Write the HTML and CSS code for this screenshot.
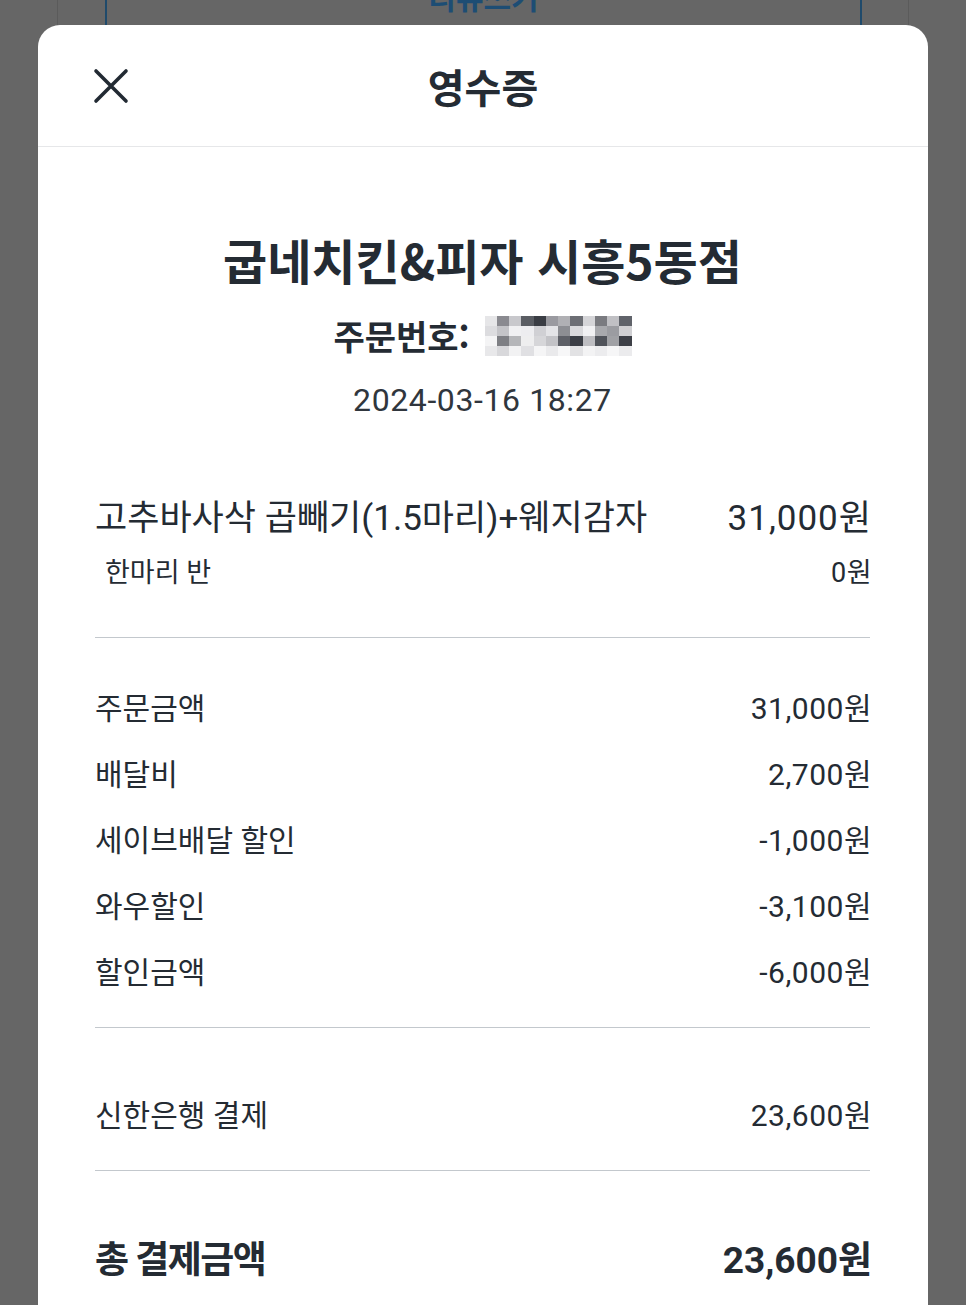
FILE: index.html
```html
<!DOCTYPE html>
<html lang="ko">
<head>
<meta charset="utf-8">
<title>영수증</title>
<link rel="stylesheet" href="styles.css">
</head>
<body>
<div class="behind">
  <div class="behind-card">
    <div class="behind-button"><span class="behind-label">리뷰쓰기</span></div>
  </div>
</div>
<div class="sheet">
  <header class="sheet-header">
    <button class="close" aria-label="닫기">
      <svg width="36" height="36" viewBox="0 0 36 36"><path d="M3 3 L33 33 M33 3 L3 33" stroke="#222a33" stroke-width="3.6" stroke-linecap="round" fill="none"/></svg>
    </button>
    <h1 class="sheet-title">영수증</h1>
    <span class="spacer"></span>
  </header>
  <main class="receipt">
    <h2 class="store">굽네치킨&amp;피자 시흥5동점</h2>
    <div class="order-no">주문번호: <span class="masked"><i style="background:#e6e6e8"></i><i style="background:#8a8a90"></i><i style="background:#c8c8cc"></i><i style="background:#5a5d63"></i><i style="background:#3a3d44"></i><i style="background:#9a9aa0"></i><i style="background:#b0b0b4"></i><i style="background:#6c6e74"></i><i style="background:#d5d5d8"></i><i style="background:#7a7b80"></i><i style="background:#c0c0c4"></i><i style="background:#60636a"></i><i style="background:#dcdcdf"></i><i style="background:#c4c4c8"></i><i style="background:#f0f0f2"></i><i style="background:#ededf0"></i><i style="background:#d0d0d4"></i><i style="background:#e4e4e7"></i><i style="background:#8d8e93"></i><i style="background:#d9d9dc"></i><i style="background:#f1f1f3"></i><i style="background:#a8a9ad"></i><i style="background:#9b9ca1"></i><i style="background:#d0d0d3"></i><i style="background:#f4f4f5"></i><i style="background:#7e7f84"></i><i style="background:#b5b6b9"></i><i style="background:#eeeeef"></i><i style="background:#d6d6d9"></i><i style="background:#c3c3c7"></i><i style="background:#5e6067"></i><i style="background:#3b3e45"></i><i style="background:#bdbdc1"></i><i style="background:#50535a"></i><i style="background:#a0a1a5"></i><i style="background:#3d4047"></i><i style="background:#e8e8ea"></i><i style="background:#d8d8db"></i><i style="background:#f2f2f3"></i><i style="background:#e0e0e3"></i><i style="background:#f5f5f6"></i><i style="background:#eaeaec"></i><i style="background:#f7f7f8"></i><i style="background:#e2e2e4"></i><i style="background:#f3f3f4"></i><i style="background:#ececee"></i><i style="background:#f6f6f7"></i><i style="background:#ebebed"></i></span></div>
    <div class="date">2024-03-16 18:27</div>

    <section class="items">
      <div class="row item"><span class="label">고추바사삭 곱빼기(1.5마리)+웨지감자</span><span class="amount">31,000원</span></div>
      <div class="row option"><span class="label">한마리 반</span><span class="amount">0원</span></div>
    </section>

    <section class="summary">
      <div class="row"><span class="label">주문금액</span><span class="amount">31,000원</span></div>
      <div class="row"><span class="label">배달비</span><span class="amount">2,700원</span></div>
      <div class="row"><span class="label">세이브배달 할인</span><span class="amount">-1,000원</span></div>
      <div class="row"><span class="label">와우할인</span><span class="amount">-3,100원</span></div>
      <div class="row"><span class="label">할인금액</span><span class="amount">-6,000원</span></div>
    </section>

    <section class="payment">
      <div class="row"><span class="label">신한은행 결제</span><span class="amount">23,600원</span></div>
    </section>

    <section class="total">
      <div class="row"><span class="label">총 결제금액</span><span class="amount">23,600원</span></div>
    </section>
  </main>
</div>
</body>
</html>
```

FILE: styles.css
```css
* { box-sizing: border-box; }

html, body {
  margin: 0;
  padding: 0;
}

body {
  width: 966px;
  height: 1305px;
  overflow: hidden;
  background: #666666;
  font-family: Roboto, "Noto Sans CJK KR", sans-serif;
  color: #242b33;
}

/* page content dimmed behind the sheet */
.behind {
  height: 25px;
  padding: 0 57px;
}
.behind-card {
  height: 25px;
  border-left: 1px solid #5b5b5b;
  border-right: 1px solid #5b5b5b;
  padding: 0 46px 0 47px;
}
.behind-button {
  height: 25px;
  border-left: 2px solid #1f4a6b;
  border-right: 2px solid #1f4a6b;
  overflow: hidden;
  text-align: center;
}
.behind-label {
  display: block;
  margin-top: -22px;
  font-family: "Noto Sans CJK KR", sans-serif;
  font-size: 30px;
  line-height: 36px;
  font-weight: 700;
  color: #1d4d74;
}

/* bottom sheet */
.sheet {
  margin: 0 38px;
  height: 1280px;
  background: #ffffff;
  border-radius: 22px 22px 0 0;
}

.sheet-header {
  height: 122px;
  border-bottom: 1px solid #e6e7e9;
  display: grid;
  grid-template-columns: 120px 1fr 120px;
  align-items: center;
}
.close {
  justify-self: start;
  margin-left: 55px;
  padding: 0;
  border: 0;
  background: none;
  width: 36px;
  height: 36px;
  display: flex;
}
.sheet-title {
  margin: 0;
  text-align: center;
  font-family: "Noto Sans CJK KR", sans-serif;
  font-size: 40px;
  font-weight: 700;
  letter-spacing: 0;
  line-height: 50px;
  color: #242b33;
}

.receipt {
  padding: 0 58px 0 57px;
}

.store {
  margin: 82px 0 0;
  text-align: center;
  font-family: "Noto Sans CJK KR", sans-serif;
  font-size: 48px;
  line-height: 60px;
  font-weight: 700;
  letter-spacing: 0;
  color: #242b33;
}

.order-no {
  margin-top: 22px;
  height: 50px;
  display: flex;
  justify-content: center;
  align-items: center;
  gap: 15px;
  font-family: "Noto Sans CJK KR", sans-serif;
  font-size: 34px;
  font-weight: 700;
  letter-spacing: 0;
  line-height: 50px;
}
.masked {
  display: grid;
  grid-template-columns: repeat(12, 12.25px);
  grid-auto-rows: 10px;
  width: 147px;
  height: 40px;
}
.masked i {
  display: block;
}

.date {
  margin-top: 19px;
  text-align: center;
  font-size: 32px;
  letter-spacing: 0.6px;
  line-height: 40px;
  color: #30363d;
}

.row {
  display: flex;
  justify-content: space-between;
  align-items: center;
}
.amount {
  letter-spacing: 0.5px;
  margin-right: -2px;
}

.items {
  margin-top: 69px;
  padding-bottom: 49px;
  border-bottom: 1px solid #c3c8cd;
}
.row.item {
  height: 50px;
  font-size: 35px;
}
.row.item .amount {
  letter-spacing: 1px;
}
.row.option {
  margin-top: 13px;
  height: 36px;
  font-size: 27px;
  padding-left: 10px;
}

.summary {
  padding: 35px 0 24px;
  border-bottom: 1px solid #c3c8cd;
}
.summary .row,
.payment .row {
  height: 66px;
  font-size: 30px;
}

.payment {
  padding: 52px 0 24px;
  border-bottom: 1px solid #c3c8cd;
}

.total {
  padding-top: 61px;
}
.total .row {
  height: 50px;
  font-size: 37px;
  font-weight: 700;
}
.total .label {
  letter-spacing: -1.5px;
}
.total .amount {
  letter-spacing: 0;
}
```
